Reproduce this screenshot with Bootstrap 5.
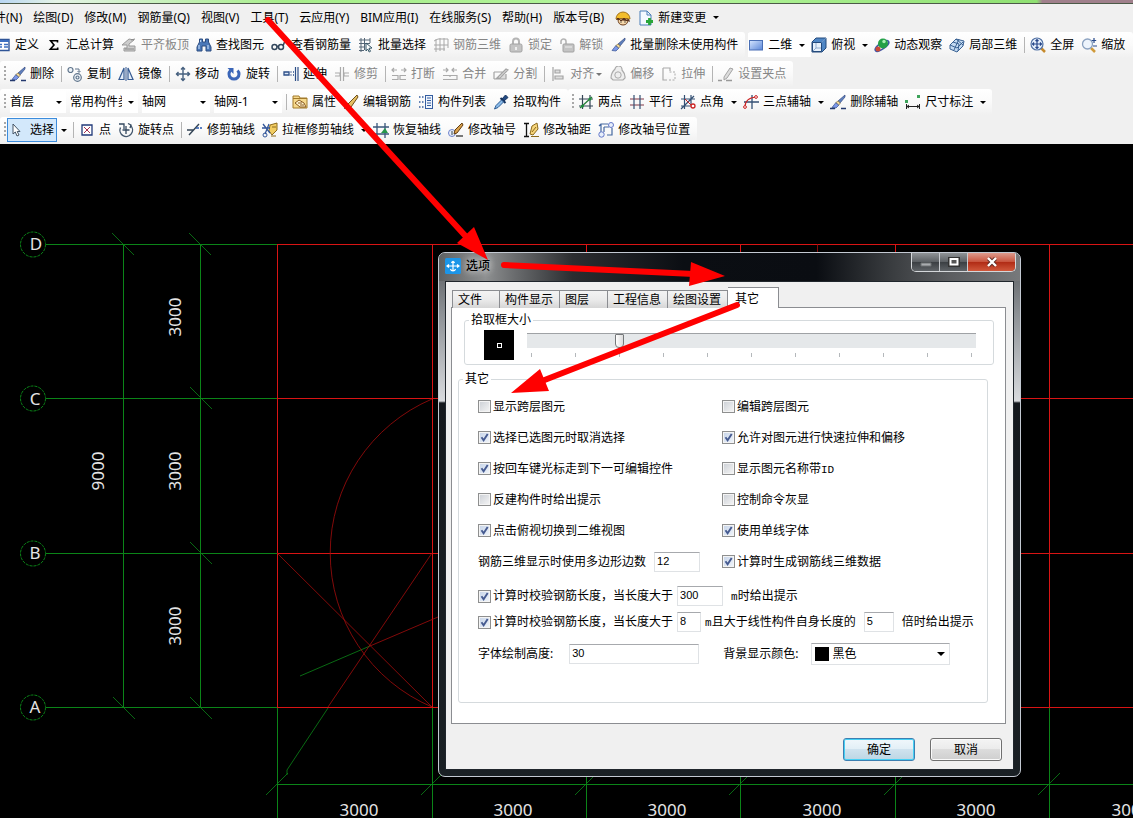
<!DOCTYPE html>
<html lang="zh-CN">
<head>
<meta charset="utf-8">
<meta name="viewport" content="width=device-width, initial-scale=1">
<title>选项</title>
<link href="https://cdn.jsdelivr.net/npm/bootstrap@5.3.0/dist/css/bootstrap.min.css" rel="stylesheet">
<style>
body{font:12px/18px "Noto Sans","Noto Sans CJK SC",sans-serif;color:#000;background:#000}
.ribbon{background:#f0f0f0}
.glass-strip{height:4px;background:linear-gradient(90deg,#b9d6f2 0,#e4f3e6 5%,#a8ee8c 25%,#b4f59c 60%,#8fe072 91.5%,#a0808c 92%);border-bottom:1px solid #4c5a48}
.menu-row{height:27px;margin-left:-6px;gap:11px}
.menu-row a{color:#000;text-decoration:none}
.bar-row{height:28px;gap:3px}
.bar-row.first{margin-bottom:1px}
.band{height:26px;padding-left:4px;background:linear-gradient(#fff,#fafafa 50%,#f0f0f0);border-radius:3px}
.band.cut{margin-left:-5px;padding-left:0}
.band.flush{padding-left:0}
.grip{width:2px;height:16px;margin-right:4px;background:repeating-linear-gradient(#a8a8a8 0 2px,transparent 2px 4px)}
.rule{width:1px;height:16px;margin-right:5px;background:#b4b4b4}
.tool{display:flex;align-items:center;gap:4px;height:24px;margin-right:7px;padding:0;border:0;background:none;color:#000;white-space:nowrap}
.tool:disabled{color:#868686}
.tool.split{margin-right:0}
.tool.picked{margin:0 -3px;padding:0 2px;border:1px solid #3c8cdc;background:#d3e8fb}
.drop{width:19px;height:22px;padding:0;border:0;background:none;display:flex;align-items:center;justify-content:center}
.drop.tight{width:9px;margin-right:7px}
.drop::after{content:"";border:3px solid transparent;border-top:3px solid #000;border-bottom:0}
.drop.tight::after{border-top-color:#777}
.ic{width:16px;height:16px;flex:none;display:block}
.pick{appearance:none;width:68px;height:22px;margin-right:4px;padding:0 16px 0 0;border:0;border-radius:0;color:#000;background:#fff url("data:image/svg+xml,%3Csvg xmlns='http://www.w3.org/2000/svg' width='6' height='3'%3E%3Cpath d='M0 0h6L3 3z'/%3E%3C/svg%3E") no-repeat right 4px center}
.pick.floor{width:56px}
.view-mode{background:#fff}

.canvas-area{min-height:0;overflow:hidden}
.drawing,.pointers{position:absolute;left:0;top:0}
.pointers{pointer-events:none}
.drawing text{font:17px "Noto Sans",sans-serif;fill:#e4e4e4;text-anchor:middle}

.win{position:absolute;left:438px;top:108px;width:583px;padding:0 6px 6px;border:1px solid #c3c9d2;border-radius:7px;
 background:linear-gradient(#55585b 0,#8c9094 60px,#d9dbde 148px,#15191d 150px,#1a2024 100%);overflow:hidden}
.win-title{height:28px;margin:0 -6px;padding-left:6px;background:linear-gradient(90deg,#5e6163 0,#8d8f90 8%,#6a6c6e 13%,#2b2d30 23%,#0b0e13 42%,#0a0d12 65%,#3a3d40 78%,#5b5d60 88%,#77797b 100%)}
.win-name{font-size:12px;line-height:18px;color:#000;text-shadow:0 0 6px #ddd,0 0 10px #ccc;margin:0 auto 0 5px}
.win-ctl{height:19px;margin-right:4px;border:1px solid #d4d7da;border-top:0;border-radius:0 0 5px 5px;overflow:hidden}
.win-ctl button{width:28px;padding:0;border:0;border-right:1px solid #c9ccd0;background:linear-gradient(#8f9396,#5c6064 48%,#3a3e42 50%,#5f6367)}
.win-ctl .shut{width:47px;border-right:0;background:linear-gradient(#dd9a8c,#c9553f 48%,#b02a14 50%,#d0583c)}
.win-ctl svg{display:block;margin:auto}
.win-body{background:#f0f0f0;border:1px solid #20262c;padding:5px 7px 8px 5px}
.win-tabs{padding-left:1px;margin-bottom:-1px;position:relative}
.win-tabs button{height:18px;width:48px;padding:0 0 0 5px;text-align:left;white-space:nowrap;border:1px solid #8b8d91;border-bottom:0;background:linear-gradient(#f3f3f3,#ebebeb 50%,#d6d6d6);line-height:17px;color:#000}
.win-tabs .wide{width:60px}
.win-tabs button+button{border-left:0}
.win-tabs .current{width:51px;height:21px;background:#fff;padding-left:7px}
.sheet{background:#fff;border:1px solid #8b8d91;padding:3px 17px 20px 6px}
.group{border:1px solid #d5dadd;border-radius:3px;min-width:0;padding:0}
.group legend{float:none;width:auto;margin:0 0 0 4px;padding:0 2px;font-size:12px;line-height:18px}
.group.cursor-size{margin:0 -6px 5px 6px;height:54px}
.cursor-size .inner{padding:1px 17px 0 19px;gap:13px}
.swatch{width:30px;height:30px;background:#000}
.swatch i{width:5px;height:5px;border:1px solid #fff}
.track{appearance:none;display:block;width:100%;height:15px;margin:3px 0 5px;background:#e5e8ea;border-top:1px solid #9fa2a5}
.track::-webkit-slider-thumb{appearance:none;width:9px;height:14px;border:1px solid #75787a;border-radius:1px 1px 4px 4px;background:linear-gradient(90deg,#fff,#dcdcdc)}
.ticks{padding:0 4px}
.ticks i{width:1px;height:4px;background:#b4b8bb}
.group.other{height:333px}
.other .inner{padding:3px 16px 0 19px}
.opts{display:grid;grid-template-columns:244px 1fr;grid-auto-rows:31px;align-items:center;margin-bottom:6px}
.opt{display:flex;align-items:center;gap:2px;margin:0;white-space:nowrap}
.lat{font:11px "Liberation Mono",monospace}
.form-check-input.tick{flex:none;width:13px;height:13px;margin:0;border:1px solid #8e8f8f;border-radius:0;background:linear-gradient(135deg,#cbcfd5,#f6f6f6) padding-box;box-shadow:inset 0 0 0 1px #f4f4f4}
.form-check-input.tick:checked{background:url("data:image/svg+xml,%3Csvg xmlns='http://www.w3.org/2000/svg' viewBox='0 0 11 11'%3E%3Cpath d='M2.5 5.2L4.6 8.2 8.7 2' fill='none' stroke='%23465b91' stroke-width='1.9'/%3E%3C/svg%3E") center/11px 11px no-repeat,linear-gradient(135deg,#c5d3e8,#f2f6fb)}
.cell{height:20px;padding:0 2px 2px;border:1px solid #dfe2e5;border-top-color:#a7a9ad;font:11px/16px "Liberation Sans",sans-serif;color:#000}
.w24{width:24px}.w30{width:30px}.w46{width:46px}.w130{width:130px}
.line{height:26px;display:flex;align-items:center;white-space:nowrap}
.line.last{margin-top:6px}
.shade{appearance:none;width:139px;height:22px;margin-left:13px;padding:0 0 0 20px;border:1px solid #dfe2e5;border-top-color:#a7a9ad;border-radius:0;color:#000;background:url("data:image/svg+xml,%3Csvg xmlns='http://www.w3.org/2000/svg' width='8' height='4'%3E%3Cpath d='M0 0h8L4 4z'/%3E%3C/svg%3E") no-repeat right 4px center,linear-gradient(#000,#000) 3px 3px/14px 14px no-repeat,#fff}
.win-foot{padding:14px 4px 0;gap:15px}
.win-foot button{width:72px;height:23px;padding:0;border:1px solid #707070;border-radius:3px;color:#000;background:linear-gradient(#f4f4f4,#ebebeb 48%,#dcdcdc 50%,#cfcfcf);box-shadow:inset 0 0 0 1px #fafafa}
.win-foot .main-act{border-color:#3c7fb1;background:linear-gradient(#f0f7fb,#e2eff6 48%,#cfe2ee 50%,#bcd6e4);box-shadow:inset 0 0 0 1px #46d0f4}
</style>
</head>
<body class="d-flex flex-column vh-100 overflow-hidden">

<svg width="0" height="0" class="position-absolute" aria-hidden="true">
 <defs>
  <linearGradient id="gb" x2="1" y2="1"><stop stop-color="#d6e6ff"/><stop offset="1" stop-color="#5a86d8"/></linearGradient>
  <g id="brush"><path d="M15 1L8 7l2 2 5-6z" fill="#5f82c0" stroke="#33487e" stroke-width=".7"/><path d="M8 7l2.3 2-1.6 2.2-3-2.5z" fill="#f0d9a0" stroke="#7c6123" stroke-width=".6"/><path d="M5.8 8.7l3 2.5L6 14l-4-.5z" fill="#7c97e8" stroke="#35508f" stroke-width=".7"/></g>
 </defs>
 <symbol id="define" viewBox="0 0 16 16"><path d="M1 2.5h13v11H1z" fill="#fff" stroke="#2f5597" stroke-width="1.4"/><path d="M1 3h13v2H1z" fill="#3d6fc0"/><path d="M3 7.5h4M3 10h4M9 7.5h4M9 10h4" stroke="#3d6fc0" stroke-width="1.3"/></symbol>
 <symbol id="sum" viewBox="0 0 16 16"><path d="M11.500 5.500V3.700H4.600L8 8l-3.700 4.300h7.400V10.500" fill="none" stroke="#000" stroke-width="1.600"/></symbol>
 <symbol id="slab" viewBox="0 0 16 16"><path d="M1 8l7-6 5 1-5 4v2h6v5H3v-3h3V8z" fill="#ccc" stroke="#999"/><path d="M4 12h9M10 3l4-1" stroke="#888"/></symbol>
 <symbol id="find" viewBox="0 0 16 16"><path d="M3.500 2h3v3h3V2h3v3l2.500 5v4h-5V9h-4v5H1v-4l2.500-5z" fill="#4b78b8" stroke="#2c4c80"/><path d="M3 8v4M12 8v4M4.600 3v2" stroke="#bcd6f5" stroke-width="1.200"/></symbol>
 <symbol id="specs" viewBox="0 0 16 16"><g fill="none" stroke="#33475c" stroke-width="1.500"><circle cx="3.500" cy="10" r="2.500"/><circle cx="10" cy="10" r="2.500"/><path d="M6 9.500h1.500M12 9l1.500-4"/></g></symbol>
 <symbol id="batch" viewBox="0 0 16 16"><path d="M1 3h11M1 6.500h11M1 10h6M1 13.500h5M3 1v14M6.500 1v12M12 1v5" stroke="#567" fill="none"/><path d="M8 6l6 5-3 .3 1.500 3-1.300.7-1.500-3L8 14z" fill="#fff" stroke="#356"/></symbol>
 <symbol id="rebar3d" viewBox="0 0 16 16"><path d="M1 4l4-2h10M1 8h14M1 12h11M3 2v13M7 1v13M11 1v13M15 2v9" stroke="#a8a8a8" fill="none"/></symbol>
 <symbol id="lock" viewBox="0 0 16 16"><path d="M5 7V4.500a3 3 0 016 0V7" fill="none" stroke="#b5b5b5" stroke-width="2"/><rect x="2" y="7" width="12" height="8" rx="1.500" fill="#c4c4c4" stroke="#a2a2a2"/><path d="M7 10h2v3H7z" fill="#eee"/></symbol>
 <symbol id="unlock" viewBox="0 0 16 16"><path d="M2 7V4.500a2.500 2.500 0 015 0V7" fill="none" stroke="#b5b5b5" stroke-width="1.600"/><rect x="4" y="7" width="11" height="8" rx="1" fill="#c4c4c4" stroke="#a2a2a2"/><path d="M6 10h7" stroke="#eee"/></symbol>
 <symbol id="clean" viewBox="0 0 16 16"><use href="#brush"/></symbol>
 <symbol id="plane" viewBox="0 0 16 16"><rect x="1.500" y="3.500" width="13" height="9.500" fill="url(#gb)" stroke="#4a6fb5"/></symbol>
 <symbol id="cube" viewBox="0 0 16 16"><path d="M1 5l4-4h10v10l-4 4H1z" fill="#4f86c4" stroke="#244a7c"/><path d="M1.500 5.500h9v9h-9z" fill="#e8f1fb" stroke="#244a7c"/><path d="M10.500 5.500L15 1M5 6v5h5M5 11l-3 3" stroke="#7c9cc4" fill="none" stroke-width=".8"/></symbol>
 <symbol id="orbit" viewBox="0 0 16 16"><ellipse cx="8" cy="9" rx="8" ry="3" transform="rotate(-35 8 9)" fill="none" stroke="#3c56a8" stroke-width="1.500"/><circle cx="9" cy="6.500" r="5" fill="#23a047"/><circle cx="10" cy="4.500" r="1.700" fill="#a8efb4"/><circle cx="4" cy="12" r="2.500" fill="#cc4a35"/></symbol>
 <symbol id="part3d" viewBox="0 0 16 16"><path d="M1 8l6-6 8 2-1 5-6 6-7-3z" fill="#c3daf2" stroke="#3a6293"/><path d="M4 5l6 2-1 7M7 2l7 6M1 8l7 3 6-6M10 2L5 13" stroke="#3a6293" fill="none"/></symbol>
 <symbol id="full" viewBox="0 0 16 16"><path d="M11 11l4 4" stroke="#c68a2c" stroke-width="2.500"/><circle cx="7" cy="7" r="6" fill="#e7f0fc" stroke="#5272a4" stroke-width="1.200"/><path d="M7 2.500v9M2.500 7h9M5.500 4L7 2.500 8.500 4M5.500 10L7 11.500 8.500 10M4 5.500L2.500 7 4 8.500M10 5.500L11.500 7 10 8.500" fill="none" stroke="#27488a" stroke-width="1.200"/></symbol>
 <symbol id="zoomer" viewBox="0 0 16 16"><path d="M10 11l4 4" stroke="#d09a3a" stroke-width="2.500"/><circle cx="6.500" cy="7" r="5" fill="#edf4fc" stroke="#8ba2c0" stroke-width="1.300"/><path d="M13 1v5M10.800 3.500h4.400M12 9h4" stroke="#27488a" stroke-width="1.200"/></symbol>
 <symbol id="erase" viewBox="0 0 16 16"><use href="#brush"/><path d="M0 14.500h5M11 14.500h5" stroke="#23386e" stroke-width="1.300"/></symbol>
 <symbol id="copy" viewBox="0 0 16 16"><g fill="#eef3f8" stroke="#60758c" stroke-width="1.200"><circle cx="3.500" cy="4" r="2.500"/><circle cx="10.500" cy="11.500" r="3.800"/><circle cx="10.500" cy="11.500" r="1.500"/></g><path d="M8 3h4v3M10.500 5L12 6.500 13.500 5" fill="none" stroke="#60758c"/></symbol>
 <symbol id="mirror" viewBox="0 0 16 16"><path d="M6 2v11.500H1zM10 2v11.500h5z" fill="#e5eef8" stroke="#365b93" stroke-width="1.200"/><path d="M8 1v14" stroke="#365b93"/></symbol>
 <symbol id="move" viewBox="0 0 16 16"><path d="M8 1v14M1 8h14M6 3.500L8 1.500l2 2M6 12.500l2 2 2-2M3.500 6l-2 2 2 2M12.500 6l2 2-2 2" fill="none" stroke="#46607f" stroke-width="1.400"/></symbol>
 <symbol id="rotate" viewBox="0 0 16 16"><path d="M4.500 4.500a5 5 0 107 0" fill="none" stroke="#3b66b8" stroke-width="3"/><path d="M1.500 2h6v6z" fill="#3b66b8"/></symbol>
 <symbol id="extend" viewBox="0 0 16 16"><path d="M1 6h5v3H1zM7.500 6h1M10 6h1M7.500 9h1M10 9h1" fill="#dce8f8" stroke="#2d4f88" stroke-width="1.300"/><path d="M12.500 1v14M15 1v14" stroke="#2d4f88" stroke-width="1.200"/></symbol>
 <symbol id="trim" viewBox="0 0 16 16"><path d="M1 7h5v3H1M15 7h-5v3h5M6.500 1v14M9.500 1v14" fill="none" stroke="#aaa" stroke-width="1.200"/></symbol>
 <symbol id="snap" viewBox="0 0 16 16"><path d="M1 9.500h6v4H1M15 9.500H9v4h6M1 4h5M3 2L1 4l2 2M10 4h5M13 2l2 2-2 2" fill="none" stroke="#aaa" stroke-width="1.200"/></symbol>
 <symbol id="merge" viewBox="0 0 16 16"><path d="M1 9.500h14v4H1M1 4h5M4 2l2 2-2 2M10 4h5M12 2l-2 2 2 2M8 9v2" fill="none" stroke="#aaa" stroke-width="1.200"/></symbol>
 <symbol id="divide" viewBox="0 0 16 16"><path d="M1 6h9M1 13h12V8M1 6v7M4 12l9-9 2 1-8 8z" fill="#ddd" stroke="#a4a4a4" stroke-width="1.200"/></symbol>
 <symbol id="align" viewBox="0 0 16 16"><path d="M3 1v14M5 4h5v3H5zM5 10h8v3H5z" fill="#ddd" stroke="#a4a4a4" stroke-width="1.200"/></symbol>
 <symbol id="offset" viewBox="0 0 16 16"><path d="M5 3a3.500 3.500 0 017 1q3.500 4 3 8l-2 2H3l-2-2q0-5 4-9z" fill="#eee" stroke="#aaa" stroke-width="1.200"/><circle cx="8" cy="9" r="3.200" fill="none" stroke="#aaa"/></symbol>
 <symbol id="stretch" viewBox="0 0 16 16"><path d="M2 2h7v3M2 2v12h4" fill="none" stroke="#aaa" stroke-width="1.200"/><path d="M8 14h6V6H8" fill="none" stroke="#aaa" stroke-dasharray="2 1.500"/></symbol>
 <symbol id="grippt" viewBox="0 0 16 16"><path d="M6 11l6-9 3 1-6 9-3 2z" fill="#ddd" stroke="#a4a4a4"/><path d="M0 14.500h4M8 14.500h6" stroke="#999" stroke-width="1.300"/></symbol>
 <symbol id="props" viewBox="0 0 16 16"><path d="M1 2h6l1 2h7v10H1z" fill="#f6d98d" stroke="#a27a2a"/><path d="M1 4.500h14" stroke="#a27a2a"/><path d="M3 9l4-3 5 3 2 4H8z" fill="#fff3cf" stroke="#8a5a1e"/><path d="M6 9h4M8 11h4" stroke="#8a5a1e"/></symbol>
 <symbol id="pen" viewBox="0 0 16 16"><path d="M14 1L5 10l-1 4 4-1 7-10z" fill="#e5bf63" stroke="#6d4e18"/><path d="M1 14h7" stroke="#222" stroke-width="1.300"/></symbol>
 <symbol id="listing" viewBox="0 0 16 16"><path d="M1 3h1.500M4 3h1.500M1 8h1.500M4 8h1.500M1 13h1.500M4 13h1.500" stroke="#345da0" stroke-width="1.600"/><rect x="7.500" y="1.500" width="7" height="13" fill="#eef4fc" stroke="#345da0"/><path d="M9 4h4M9 6.500h4M9 9h4M9 11.500h4" stroke="#345da0"/></symbol>
 <symbol id="dropper" viewBox="0 0 16 16"><path d="M9 5l3.500-4L15 3.500 11 7z" fill="#234a82" stroke="#173460"/><path d="M7.500 4l5 5" stroke="#173460" stroke-width="2"/><path d="M8.500 6L3 11.500 1.500 15 5 13.500 10.500 8z" fill="#8bbbe8" stroke="#2c5c96"/></symbol>
 <symbol id="twopt" viewBox="0 0 16 16"><path d="M1 5h14M1 12h14M4.500 1v14M12 1v14" stroke="#345" stroke-width="1.200"/><path d="M2 14L14 3" stroke="#277d3a" stroke-width="1.300"/><circle cx="12" cy="5" r="1.500" fill="#1d8f3b"/><circle cx="4.500" cy="12" r="1.500" fill="#1d8f3b"/></symbol>
 <symbol id="parallel" viewBox="0 0 16 16"><path d="M1 5h14M1 11h14" stroke="#803848" stroke-width="1.200"/><path d="M5 1v14M11 1v14" stroke="#345074" stroke-width="1.200"/></symbol>
 <symbol id="angle" viewBox="0 0 16 16"><path d="M1 5h14M1 12h10M4.500 1v14M11 1v9M1 15L14 2" stroke="#345074" stroke-width="1.200"/><path d="M5 5l8 8" stroke="#c22"/><circle cx="13" cy="12" r="2" fill="#fff" stroke="#c22" stroke-width="1.300"/></symbol>
 <symbol id="threept" viewBox="0 0 16 16"><path d="M9 1v14M1 8h15" stroke="#345074" stroke-width="1.300"/><path d="M2 13Q2 4 13 3" fill="none" stroke="#c22" stroke-width="1.200"/><g fill="#fff" stroke="#c22"><circle cx="2" cy="13" r="1.400"/><circle cx="13" cy="3" r="1.400"/></g></symbol>
 <symbol id="measure" viewBox="0 0 16 16"><path d="M1.500 10v5M14.500 10v5M2 12.500h12M4 11l-2 1.500L4 14M12 11l2 1.500-2 1.500" stroke="#222" fill="none"/><path d="M0 6h3v3H0zM12 1h3v3h-3z" fill="#3da35a"/></symbol>
 <symbol id="cursor" viewBox="0 0 16 16"><path d="M3 2v10l2.300-2L7 14l2-1-1.800-3.500H10z" fill="#fff" stroke="#456"/></symbol>
 <symbol id="point" viewBox="0 0 16 16"><path d="M3 3h10v10H3z" fill="#fff" stroke="#223a7a" stroke-width="1.300"/><path d="M5 5l6 6M11 5l-6 6" stroke="#a33050"/></symbol>
 <symbol id="rotpt" viewBox="0 0 16 16"><path d="M2.500 5.500a6.300 6.300 0 1010-2" fill="none" stroke="#44586e" stroke-width="1.400"/><path d="M1 2h5v5M8 4v8M4.500 8h7M10 1.500l3 1.500-1 3" fill="none" stroke="#33485f" stroke-width="1.300"/></symbol>
 <symbol id="trimaxis" viewBox="0 0 16 16"><path d="M0 8h7M2 13L12 2" stroke="#345" stroke-width="1.400"/><path d="M9 6h6" stroke="#2a5ab0" stroke-width="1.300" stroke-dasharray="3 1"/></symbol>
 <symbol id="boxtrim" viewBox="0 0 16 16"><path d="M8 3l7-2v7l-5 5-3-4z" fill="#f2cd62" stroke="#8c6a1d"/><path d="M1 2l7 9M7 2L3 12M0 6h8" stroke="#32569a" stroke-width="1.300"/><circle cx="3" cy="13" r="2" fill="none" stroke="#32569a"/><path d="M9 14h5M10 5h4" stroke="#8c6a1d"/></symbol>
 <symbol id="restore" viewBox="0 0 16 16"><path d="M0 5h16M0 12h16M4 1v15M12 1v15" stroke="#3a587c" stroke-width="1.300"/><path d="M8 11l4-5 3 5z" fill="#26964a"/></symbol>
 <symbol id="axisno" viewBox="0 0 16 16"><circle cx="4" cy="11" r="3.500" fill="#e9f0fa" stroke="#6c81cc"/><path d="M4 9v4" stroke="#345"/><path d="M14 1L7 8l-1 4 3-1 6-8z" fill="#d9a14c" stroke="#623e12"/><path d="M8 14h7" stroke="#333" stroke-width="1.300"/></symbol>
 <symbol id="axisgap" viewBox="0 0 16 16"><path d="M1 1.500h5M1 14.500h5M3.500 2v12" stroke="#111" stroke-width="1.300"/><path d="M9 4l5-3 1 6-5 6-3-1z" fill="#f6d57b" stroke="#8c6a1d"/><path d="M9 10l4-5M8 14.500h8" stroke="#8c6a1d"/></symbol>
 <symbol id="axispos" viewBox="0 0 16 16"><path d="M3 10V2h7M1 4l2-2M6 5h5M6 5v5M9 13h5V6" fill="none" stroke="#4468a0" stroke-width="1.200"/><g fill="#e7effb" stroke="#6478c8"><circle cx="3.500" cy="12.500" r="2.700"/><circle cx="13" cy="3" r="2.500"/></g></symbol>
 <symbol id="helper" viewBox="0 0 16 16"><path d="M1 9a7 7 0 0114 0z" fill="#f3bd2c" stroke="#a4731a"/><path d="M3 9h10q0 6-5 6T3 9z" fill="#f7d9ac" stroke="#6b3c1a"/><path d="M1.500 9.500q1.500-3 3 0t3 0 3 0 3 0l1 2" fill="#59311a" stroke="#59311a"/><path d="M6 11.500v1M10 11.500v1" stroke="#222" stroke-width="1.300"/></symbol>
 <symbol id="newdoc" viewBox="0 0 16 16"><path d="M2 1h7l4 4v10H2z" fill="#f4f9ff" stroke="#4a7eb8"/><path d="M9 1v4h4" fill="none" stroke="#4a7eb8"/><path d="M11.500 8v7M8 11.500h7" stroke="#29a53a" stroke-width="2.800"/></symbol>
</svg>

<header class="ribbon flex-shrink-0 overflow-hidden">
 <div class="glass-strip"></div>
 <nav class="menu-row d-flex align-items-center text-nowrap">
  <a href="#">件(N)</a><a href="#">绘图(D)</a><a href="#">修改(M)</a><a href="#">钢筋量(Q)</a><a href="#">视图(V)</a><a href="#">工具(T)</a><a href="#">云应用(Y)</a><a href="#">BIM应用(I)</a><a href="#">在线服务(S)</a><a href="#">帮助(H)</a><a href="#">版本号(B)</a>
  <span class="d-flex align-items-center">
   <button class="tool" aria-label="助手"><svg class="ic"><use href="#helper"/></svg></button>
   <button class="tool split"><svg class="ic"><use href="#newdoc"/></svg>新建变更</button><button class="drop" aria-label="更多"></button>
  </span>
 </nav>

 <div class="bar-row first d-flex align-items-center">
  <div class="band cut d-flex align-items-center flex-shrink-0">
   <button class="tool"><svg class="ic"><use href="#define"/></svg>定义</button>
   <button class="tool"><svg class="ic"><use href="#sum"/></svg>汇总计算</button>
   <button class="tool" disabled><svg class="ic"><use href="#slab"/></svg>平齐板顶</button>
   <button class="tool"><svg class="ic"><use href="#find"/></svg>查找图元</button>
   <button class="tool"><svg class="ic"><use href="#specs"/></svg>查看钢筋量</button>
   <button class="tool"><svg class="ic"><use href="#batch"/></svg>批量选择</button>
   <button class="tool" disabled><svg class="ic"><use href="#rebar3d"/></svg>钢筋三维</button>
   <button class="tool" disabled><svg class="ic"><use href="#lock"/></svg>锁定</button>
   <button class="tool" disabled><svg class="ic"><use href="#unlock"/></svg>解锁</button>
   <button class="tool"><svg class="ic"><use href="#clean"/></svg>批量删除未使用构件</button>
  </div>
  <div class="band flush d-flex align-items-center flex-shrink-0 flex-grow-1">
   <div class="view-mode d-flex align-items-center"><button class="tool split"><svg class="ic"><use href="#plane"/></svg>二维</button><button class="drop" aria-label="更多视图"></button></div>
   <button class="tool split"><svg class="ic"><use href="#cube"/></svg>俯视</button><button class="drop" aria-label="更多视角"></button>
   <button class="tool"><svg class="ic"><use href="#orbit"/></svg>动态观察</button>
   <button class="tool"><svg class="ic"><use href="#part3d"/></svg>局部三维</button>
   <span class="rule"></span>
   <button class="tool"><svg class="ic"><use href="#full"/></svg>全屏</button>
   <button class="tool"><svg class="ic"><use href="#zoomer"/></svg>缩放</button>
  </div>
 </div>

 <div class="bar-row d-flex align-items-center">
  <div class="band d-flex align-items-center flex-shrink-0">
   <span class="grip"></span>
   <button class="tool"><svg class="ic"><use href="#erase"/></svg>删除</button>
   <span class="rule"></span>
   <button class="tool"><svg class="ic"><use href="#copy"/></svg>复制</button>
   <button class="tool"><svg class="ic"><use href="#mirror"/></svg>镜像</button>
   <span class="rule"></span>
   <button class="tool"><svg class="ic"><use href="#move"/></svg>移动</button>
   <button class="tool"><svg class="ic"><use href="#rotate"/></svg>旋转</button>
   <span class="rule"></span>
   <button class="tool"><svg class="ic"><use href="#extend"/></svg>延伸</button>
   <button class="tool" disabled><svg class="ic"><use href="#trim"/></svg>修剪</button>
   <span class="rule"></span>
   <button class="tool" disabled><svg class="ic"><use href="#snap"/></svg>打断</button>
   <button class="tool" disabled><svg class="ic"><use href="#merge"/></svg>合并</button>
   <button class="tool" disabled><svg class="ic"><use href="#divide"/></svg>分割</button>
   <span class="rule"></span>
   <button class="tool split" disabled><svg class="ic"><use href="#align"/></svg>对齐</button><button class="drop tight" disabled aria-label="更多对齐"></button>
   <button class="tool" disabled><svg class="ic"><use href="#offset"/></svg>偏移</button>
   <button class="tool" disabled><svg class="ic"><use href="#stretch"/></svg>拉伸</button>
   <span class="rule"></span>
   <button class="tool" disabled><svg class="ic"><use href="#grippt"/></svg>设置夹点</button>
  </div>
 </div>

 <div class="bar-row d-flex align-items-center gap-0">
  <div class="band d-flex align-items-center flex-shrink-0">
   <span class="grip"></span>
   <select class="pick floor" aria-label="楼层"><option>首层</option></select>
   <select class="pick" aria-label="构件类型"><option>常用构件类</option></select>
   <select class="pick" aria-label="构件"><option>轴网</option></select>
   <select class="pick" aria-label="构件名称"><option>轴网-1</option></select>
   <span class="rule"></span>
   <button class="tool"><svg class="ic"><use href="#props"/></svg>属性</button>
   <button class="tool"><svg class="ic"><use href="#pen"/></svg>编辑钢筋</button>
   <button class="tool"><svg class="ic"><use href="#listing"/></svg>构件列表</button>
   <button class="tool"><svg class="ic"><use href="#dropper"/></svg>拾取构件</button>
  </div>
  <div class="band d-flex align-items-center flex-shrink-0">
   <span class="grip"></span>
   <button class="tool"><svg class="ic"><use href="#twopt"/></svg>两点</button>
   <button class="tool"><svg class="ic"><use href="#parallel"/></svg>平行</button>
   <button class="tool split"><svg class="ic"><use href="#angle"/></svg>点角</button><button class="drop" aria-label="更多点角"></button>
   <button class="tool split"><svg class="ic"><use href="#threept"/></svg>三点辅轴</button><button class="drop" aria-label="更多辅轴"></button>
   <button class="tool"><svg class="ic"><use href="#erase"/></svg>删除辅轴</button>
   <button class="tool split"><svg class="ic"><use href="#measure"/></svg>尺寸标注</button><button class="drop" aria-label="更多标注"></button>
  </div>
 </div>

 <div class="bar-row d-flex align-items-center">
  <div class="band d-flex align-items-center flex-shrink-0">
   <span class="grip"></span>
   <button class="tool picked"><svg class="ic"><use href="#cursor"/></svg>选择</button><button class="drop" aria-label="更多选择"></button>
   <span class="rule"></span>
   <button class="tool"><svg class="ic"><use href="#point"/></svg>点</button>
   <button class="tool"><svg class="ic"><use href="#rotpt"/></svg>旋转点</button>
   <span class="rule"></span>
   <button class="tool"><svg class="ic"><use href="#trimaxis"/></svg>修剪轴线</button>
   <button class="tool split"><svg class="ic"><use href="#boxtrim"/></svg>拉框修剪轴线</button><button class="drop" aria-label="更多修剪"></button>
   <button class="tool"><svg class="ic"><use href="#restore"/></svg>恢复轴线</button>
   <button class="tool"><svg class="ic"><use href="#axisno"/></svg>修改轴号</button>
   <button class="tool"><svg class="ic"><use href="#axisgap"/></svg>修改轴距</button>
   <button class="tool"><svg class="ic"><use href="#axispos"/></svg>修改轴号位置</button>
  </div>
 </div>
</header>

<main class="canvas-area flex-grow-1 position-relative">
 <svg class="drawing" width="1133" height="674" viewBox="0 144 1133 674">
  <g fill="none" stroke="#0b8418">
   <path shape-rendering="crispEdges" d="M46 244.500H277M46 398.500H277M46 553.500H277M46 707.500H277M123.500 244V707M200.500 244V707M277 784.500H1133"/>
   <path shape-rendering="crispEdges" d="M277.500 708V818M432.500 708V818M586.500 708V818M740.500 708V818M895.500 708V818M1049.500 708V818"/>
   <path d="M112 233l22 22M189 233l22 22M190 387l22 22M190 542l22 22M113 697l22 22M190 697l22 22M266 795l22-22M421 795l22-22M575 795l22-22M729 795l22-22M884 795l22-22M1038 795l22-22M328 708L287 770V775M300 676L370 646" stroke-width=".8"/>
   <g stroke-dasharray="3 1"><circle cx="33" cy="244.500" r="12.500"/><circle cx="33" cy="398.500" r="12.500"/><circle cx="33" cy="553.500" r="12.500"/><circle cx="33" cy="707.500" r="12.500"/></g>
  </g>
  <g fill="none" stroke="#d81414">
   <path shape-rendering="crispEdges" d="M277 244.500H1133M277 398.500H1133M277 553.500H1133M277 707.500H1133M277.500 244V708M432.500 244V708M586.500 244V708M740.500 244V708M895.500 244V708M1049.500 244V708"/>
   <path d="M817.500 244V300M432 399A167.400 167.400 0 00432 707M277 553L432 707M432 553L328 707M370 646L438 617" stroke="#a30d0d" stroke-width=".8"/>
  </g>
  <text x="36" y="250">D</text><text x="35" y="405">C</text><text x="35" y="559">B</text><text x="35" y="713">A</text>
  <text transform="translate(181 317) rotate(-90)">3000</text><text transform="translate(181 471) rotate(-90)">3000</text><text transform="translate(181 626) rotate(-90)">3000</text><text transform="translate(104 471) rotate(-90)">9000</text>
  <text x="359" y="816">3000</text><text x="513" y="816">3000</text><text x="667" y="816">3000</text><text x="822" y="816">3000</text><text x="976" y="816">3000</text><text x="1131" y="816">3000</text>
 </svg>

 <section class="win" role="dialog" aria-labelledby="winName">
  <div class="win-title d-flex">
   <svg class="mt-1" width="16" height="18" viewBox="0 0 16 18"><rect y="1" width="16" height="16" rx="1.500" fill="#1b95e8"/><path d="M8 4v10M2.500 9h11M5.500 12Q6 14 8 14t2.500-2M6.500 6Q8 2.500 9.500 6M12 7.500l2 1.500-2 1.500M4 7.500L2 9l2 1.500" fill="none" stroke="#fff" stroke-width="1.200"/></svg>
   <h1 class="win-name mt-1" id="winName">选项</h1>
   <div class="win-ctl d-flex">
    <button aria-label="最小化"><svg width="12" height="12" viewBox="0 0 12 12"><path d="M1 7h10v3H1z" fill="#a9acaf" stroke="#6c7073"/></svg></button>
    <button aria-label="最大化"><svg width="12" height="12" viewBox="0 0 12 12"><path d="M2 3h8v6H2z" fill="none" stroke="#333" stroke-width="4"/><path d="M2.500 3h7v5.500h-7z" fill="#555" stroke="#fff" stroke-width="2"/></svg></button>
    <button class="shut" aria-label="关闭"><svg width="12" height="12" viewBox="0 0 12 12"><path d="M2.500 2.500l7 7M9.500 2.500l-7 7" stroke="#5a2a24" stroke-width="4"/><path d="M2 2l8 8M10 2l-8 8" stroke="#fff" stroke-width="2.400"/></svg></button>
   </div>
  </div>
  <div class="win-body">
   <div class="win-tabs d-flex align-items-end" role="tablist">
    <button role="tab">文件</button><button role="tab" class="wide">构件显示</button><button role="tab">图层</button><button role="tab" class="wide">工程信息</button><button role="tab" class="wide">绘图设置</button><button role="tab" class="current" aria-selected="true">其它</button>
   </div>
   <div class="sheet">
    <fieldset class="group cursor-size">
     <legend>拾取框大小</legend>
     <div class="inner d-flex">
      <div class="swatch d-flex align-items-center justify-content-center"><i></i></div>
      <div class="flex-grow-1">
       <input type="range" class="track" min="0" max="10" value="2" aria-label="拾取框大小">
       <div class="ticks d-flex justify-content-between"><i></i><i></i><i></i><i></i><i></i><i></i><i></i><i></i><i></i><i></i><i></i></div>
      </div>
     </div>
    </fieldset>
    <fieldset class="group other">
     <legend>其它</legend>
     <div class="inner">
      <div class="opts">
       <label class="opt"><input type="checkbox" class="form-check-input tick">显示跨层图元</label>
       <label class="opt"><input type="checkbox" class="form-check-input tick">编辑跨层图元</label>
       <label class="opt"><input type="checkbox" class="form-check-input tick" checked>选择已选图元时取消选择</label>
       <label class="opt"><input type="checkbox" class="form-check-input tick" checked>允许对图元进行快速拉伸和偏移</label>
       <label class="opt"><input type="checkbox" class="form-check-input tick" checked>按回车键光标走到下一可编辑控件</label>
       <label class="opt"><input type="checkbox" class="form-check-input tick"><span>显示图元名称带<span class="lat">ID</span></span></label>
       <label class="opt"><input type="checkbox" class="form-check-input tick">反建构件时给出提示</label>
       <label class="opt"><input type="checkbox" class="form-check-input tick">控制命令灰显</label>
       <label class="opt"><input type="checkbox" class="form-check-input tick" checked>点击俯视切换到二维视图</label>
       <label class="opt"><input type="checkbox" class="form-check-input tick" checked>使用单线字体</label>
       <div class="d-flex align-items-center gap-2"><label for="sides">钢筋三维显示时使用多边形边数</label><input id="sides" class="cell w46" value="12"></div>
       <label class="opt"><input type="checkbox" class="form-check-input tick" checked>计算时生成钢筋线三维数据</label>
      </div>
      <div class="line">
       <label class="opt"><input type="checkbox" class="form-check-input tick" checked>计算时校验钢筋长度，当长度大于</label>
       <input class="cell w46 ms-1 me-2" value="300" aria-label="长度上限"><span><span class="lat">m</span>时给出提示</span>
      </div>
      <div class="line">
       <label class="opt"><input type="checkbox" class="form-check-input tick" checked>计算时校验钢筋长度，当长度大于</label>
       <input class="cell w24 mx-1" value="8" aria-label="长度下限"><span><span class="lat">m</span>且大于线性构件自身长度的</span>
       <input class="cell w30 mx-2" value="5" aria-label="倍数"><span>倍时给出提示</span>
      </div>
      <div class="line last">
       <label for="glyphH">字体绘制高度:</label><input id="glyphH" class="cell w130 ms-3 me-4" value="30">
       <label for="backdrop">背景显示颜色:</label><select id="backdrop" class="shade"><option>黑色</option></select>
      </div>
     </div>
    </fieldset>
   </div>
   <div class="win-foot d-flex justify-content-end"><button class="main-act">确定</button><button>取消</button></div>
  </div>
 </section>
</main>

<svg class="pointers" width="1133" height="818" viewBox="0 0 1133 818" aria-hidden="true">
 <g stroke="#f00" stroke-width="6" stroke-linecap="round"><path d="M268 20L470 241M504 265L694 274M737 305L542 381"/></g>
 <path d="M488 260L457 243 474 227zM725 276L691 262 689 286zM511 393L540 369 549 391z" fill="#f00"/>
</svg>

<script src="https://cdn.jsdelivr.net/npm/bootstrap@5.3.0/dist/js/bootstrap.bundle.min.js"></script>
</body>
</html>
